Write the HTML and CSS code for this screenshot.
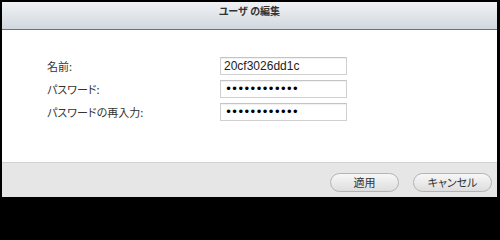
FILE: index.html
```html
<!DOCTYPE html>
<html lang="ja">
<head>
<meta charset="utf-8">
<title>ユーザ の編集</title>
<link rel="stylesheet" href="styles.css">
</head>
<body>
<div class="dialog">
  <div class="titlebar">ユーザ の編集</div>
  <div class="content">
    <div class="form">
      <label class="label" for="name">名前:</label>
      <input class="field" id="name" type="text" value="20cf3026dd1c">
      <label class="label" for="pw">パスワード:</label>
      <input class="field pw" id="pw" type="password" value="abcdefghijkl">
      <label class="label" for="pw2">パスワードの再入力:</label>
      <input class="field pw" id="pw2" type="password" value="abcdefghijkl">
    </div>
  </div>
  <div class="footer">
    <button class="btn btn-apply" type="button">適用</button>
    <button class="btn btn-cancel" type="button">キャンセル</button>
  </div>
</div>
</body>
</html>
```
FILE: styles.css
```css
html, body {
  margin: 0;
  padding: 0;
  background: #000;
}
body {
  width: 500px;
  font-family: "Noto Sans CJK JP", "Liberation Sans", sans-serif;
}
.dialog {
  margin: 2px 3px 3px 2px;
  width: 495px;
  height: 195px;
  display: flex;
  flex-direction: column;
  background: #fff;
}
.titlebar {
  height: 27px;
  box-sizing: border-box;
  border-bottom: 1px solid #6d7277;
  background: linear-gradient(#f0f2f4, #d2d8df);
  text-align: center;
  font-size: 10px;
  font-weight: bold;
  color: #333;
  line-height: 12px;
  padding-top: 3px;
  font-feature-settings: "palt";
  flex: 0 0 28px;
}
.content {
  flex: 1;
  background: #fff;
}
.form {
  display: grid;
  grid-template-columns: 173px 127px;
  row-gap: 5px;
  padding: 27px 0 0 45px;
  align-items: center;
}
.label {
  font-size: 11px;
  color: #333;
  font-feature-settings: "palt";
  line-height: 18px;
}
.field {
  box-sizing: border-box;
  height: 18px;
  width: 127px;
  margin: 0;
  border: 1px solid #d0d0d0;
  border-top-color: #c4c4c4;
  background: #fff;
  box-shadow: inset 0 1px 1px rgba(0,0,0,0.06);
  padding: 0 3px;
  font-family: "Liberation Sans", sans-serif;
  font-size: 12px;
  color: #222;
  outline: none;
}
.pw {
  font-family: "DejaVu Sans", sans-serif;
  font-size: 12px;
  letter-spacing: -1px;
  color: #000;
  padding-left: 4px;
}
.footer {
  flex: 0 0 35px;
  box-sizing: border-box;
  border-top: 1px solid #d2d2d2;
  background: #e6e6e6;
  display: flex;
  justify-content: flex-end;
  align-items: flex-start;
  gap: 14px;
  padding: 10px 5px 0 0;
}
.btn {
  height: 19px;
  box-sizing: border-box;
  border: 1px solid #b4b4b4;
  border-radius: 10px;
  background: linear-gradient(#f7f7f7, #dedede);
  font-family: "Noto Sans CJK JP", sans-serif;
  font-size: 11px;
  color: #333;
  line-height: 15px;
  padding: 0;
  font-feature-settings: "palt";
}
.btn-apply { width: 69px; }
.btn-cancel { width: 79px; }
```
